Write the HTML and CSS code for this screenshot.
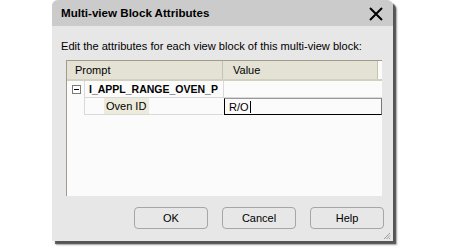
FILE: index.html
```html
<!DOCTYPE html>
<html>
<head>
<meta charset="utf-8">
<link rel="stylesheet" href="styles.css">
</head>
<body>
<div class="dialog">
  <div class="titlebar">
    <span class="title">Multi-view Block Attributes</span>
    <svg class="close" width="14" height="14" viewBox="0 0 14 14"><path d="M1 1 L13 13 M13 1 L1 13" stroke="#000" stroke-width="2" fill="none"/></svg>
  </div>
  <div class="body">
    <div class="intro">Edit the attributes for each view block of this multi-view block:</div>
    <div class="grid">
      <div class="header">
        <div class="hcell prompt">Prompt</div>
        <div class="hcell value">Value</div>
        <div class="hfill"></div>
      </div>
      <div class="row row1">
        <div class="toggle"><span class="box"><span class="minus"></span></span></div>
        <div class="pcell bold">I_APPL_RANGE_OVEN_P</div>
        <div class="vcell"></div>
      </div>
      <div class="row row2">
        <div class="toggle"></div>
        <div class="pcell child"><span class="label">Oven ID</span></div>
        <div class="vcell edit">R/O<span class="caret"></span></div>
      </div>
    </div>
    <div class="buttons">
      <button class="btn">OK</button>
      <button class="btn">Cancel</button>
      <button class="btn">Help</button>
    </div>
    <div class="grip">
      <svg width="8" height="8" viewBox="0 0 8 8"><path d="M7 1 L1 7 M7 3.5 L3.5 7 M7 6 L6 7" stroke="#9a9a9a" stroke-width="1"/></svg>
    </div>
  </div>
</div>
</body>
</html>
```
FILE: styles.css
```css
html, body {
  margin: 0;
  padding: 0;
  background: #ffffff;
}
body {
  width: 450px;
  height: 247px;
  overflow: hidden;
  font-family: "Liberation Sans", Arial, sans-serif;
}
.dialog {
  margin-left: 52px;
  width: 341px;
  height: 241px;
  background: #e7e7e7;
  border-radius: 6px 6px 0 0;
  box-shadow: 3px 3px 1px #555, 4px 4px 2px #aaa;
  display: flex;
  flex-direction: column;
  overflow: hidden;
}
.titlebar {
  height: 26px;
  background: #cbcbcb;
  display: flex;
  align-items: center;
  justify-content: space-between;
  padding: 0 10px 0 9px;
  flex: none;
}
.title {
  font-weight: bold;
  font-size: 11.6px;
  color: #000;
  margin-top: -2px;
}
.close {
  margin-top: 1px;
}
.body {
  flex: 1;
  display: flex;
  flex-direction: column;
  position: relative;
}
.intro {
  font-size: 11.1px;
  color: #000;
  padding: 14px 0 0 9px;
  height: 20px;
  box-sizing: border-box;
}
.grid {
  margin: 14px 0 0 14px;
  width: 316px;
  height: 136px;
  background: #fbfbfb;
  border-left: 1px solid #a39b8a;
  border-top: 1px solid #a39b8a;
  box-sizing: border-box;
  font-size: 11px;
  display: flex;
  flex-direction: column;
}
.header {
  display: flex;
  height: 20px;
  background: #e4e2d4;
  border-bottom: 2px solid #d3d0bf;
  box-sizing: border-box;
}
.hcell {
  display: flex;
  align-items: center;
  box-sizing: border-box;
}
.prompt {
  width: 156px;
  padding-left: 8px;
  border-right: 1px solid #c7c3b1;
}
.value {
  width: 155px;
  padding-left: 10px;
  border-right: 1px solid #c7c3b1;
}
.hfill {
  flex: 1;
  background: #fbfbfb;
}
.row {
  display: flex;
  height: 17px;
  box-sizing: border-box;
}
.toggle {
  width: 17px;
  flex: none;
  display: flex;
  align-items: center;
  justify-content: center;
}
.box {
  width: 9px;
  height: 9px;
  border: 1px solid #7a7a7a;
  box-sizing: border-box;
  background: #fff;
  display: flex;
  align-items: center;
  justify-content: center;
  margin-left: 1px;
}
.minus {
  width: 5px;
  height: 1px;
  background: #000;
}
.pcell {
  width: 139px;
  box-sizing: border-box;
  border-left: 1px solid #d9d9d9;
  border-bottom: 1px solid #d9d9d9;
  display: flex;
  align-items: center;
}
.bold {
  font-weight: bold;
  font-size: 10.5px;
  padding-left: 4px;
}
.child {
  padding-left: 19px;
}
.label {
  background: #ecebdc;
  height: 16px;
  width: 45px;
  display: flex;
  align-items: center;
  padding-left: 2px;
  box-sizing: border-box;
}
.vcell {
  flex: 1;
  box-sizing: border-box;
  border-left: 1px solid #d9d9d9;
  border-bottom: 1px solid #d9d9d9;
  display: flex;
  align-items: center;
}
.edit {
  border: 1px solid #000;
  border-top-color: #999;
  border-right-color: #777;
  margin-left: 1px;
  padding-left: 4px;
  height: 17px;
}
.caret {
  display: inline-block;
  width: 1px;
  height: 12px;
  background: #000;
  margin-left: 1px;
}
.buttons {
  display: flex;
  gap: 14px;
  margin: 11px 0 0 82px;
}
.btn {
  width: 74px;
  height: 22px;
  border: 1px solid #a6a6a6;
  border-radius: 4px;
  background: #e7e7e7;
  font-family: "Liberation Sans", Arial, sans-serif;
  font-size: 11px;
  color: #000;
  padding: 0;
}
.grip {
  position: absolute;
  right: 2px;
  bottom: 1px;
  line-height: 0;
}
```
